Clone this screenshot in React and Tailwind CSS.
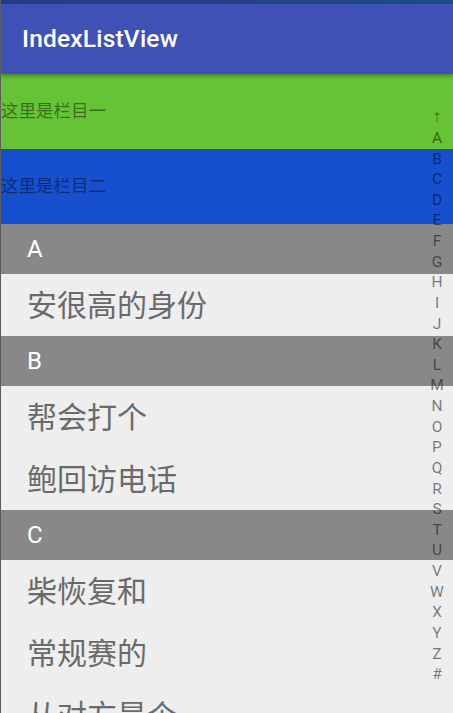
import React from 'react';

const sections = [
  { letter: 'A', items: ['安很高的身份'] },
  { letter: 'B', items: ['帮会打个', '鲍回访电话'] },
  { letter: 'C', items: ['柴恢复和', '常规赛的', '从对方是个'] },
];

const indexKeys = ['↑', ...'ABCDEFGHIJKLMNOPQRSTUVWXYZ'.split(''), '#'];

const cjk = { fontFamily: 'Roboto, "Noto Sans CJK SC", sans-serif' };

export default function App() {
  return (
    <div className="h-[713px] w-[453px] overflow-hidden border-l border-[#5c5c5c] bg-[#eeeeee]" style={cjk}>
      <div className="h-[4px] bg-gradient-to-r from-[#2a3a8c] to-[#1f4b8b]" />
      <div className="relative z-10 flex h-[70px] items-center bg-[#3f51b5] pl-[21px] shadow-[0_2px_4px_rgba(0,0,0,0.35)]">
        <span className="text-[24.5px] font-medium tracking-[0.2px] text-white">IndexListView</span>
      </div>

      <div className="relative">
        <div className="flex h-[75px] items-center bg-[#66c335] text-[17.5px] text-black/45">这里是栏目一</div>
        <div className="flex h-[75px] items-center bg-[#1650cf] text-[17.5px] text-black/45">这里是栏目二</div>

        {sections.map((s) => (
          <div key={s.letter}>
            <div className="flex h-[50px] items-center bg-[#888888] pl-[26px] text-[24px] text-white">{s.letter}</div>
            {s.items.map((item) => (
              <div key={item} className="flex h-[62px] items-center pl-[26px] text-[30px] text-[#6a6a6a]">
                {item}
              </div>
            ))}
          </div>
        ))}

        <div className="absolute right-0 top-[3px] flex h-[639px] w-[32px] flex-col items-center justify-center">
          {indexKeys.map((k) => (
            <div
              key={k}
              className={
                k === '↑'
                  ? 'flex h-[20.63px] items-center justify-center text-[11px] leading-none text-black/50'
                  : 'flex h-[20.63px] items-center justify-center text-[15.5px] leading-none text-black/50'
              }
            >
              {k}
            </div>
          ))}
        </div>
      </div>
    </div>
  );
}
